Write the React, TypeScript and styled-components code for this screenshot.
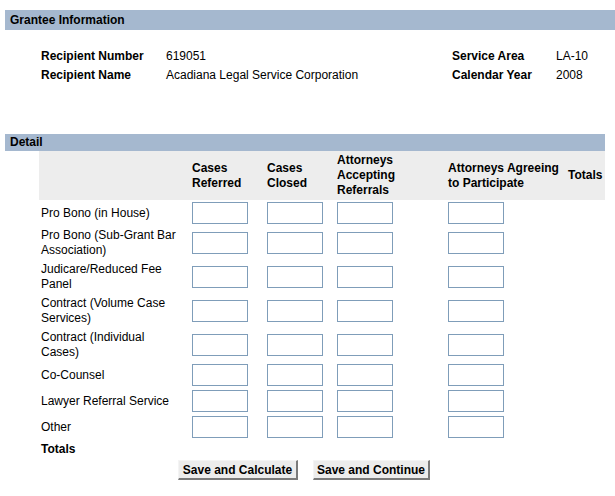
import React from "react";
import styled, { createGlobalStyle } from "styled-components";

const Global = createGlobalStyle`
  html, body { margin: 0; padding: 0; background: #ffffff; }
  body { font-family: "Liberation Sans", Arial, sans-serif; font-size: 12px; color: #000; }
`;

const Page = styled.div`
  padding: 10px 0 0 5px;
  width: 610px;
`;

const SectionBar = styled.div<{ $w: number; $h: number }>`
  width: ${(p) => p.$w}px;
  height: ${(p) => p.$h}px;
  line-height: ${(p) => p.$h}px;
  box-sizing: border-box;
  padding-left: 5px;
  background: #a5b8cf;
  font-weight: bold;
  font-size: 12px;
`;

const InfoGrid = styled.div`
  display: grid;
  grid-template-columns: 125px 286px 104px auto;
  grid-auto-rows: 19px;
  align-items: center;
  padding-left: 36px;
  margin-top: 16px;
  margin-bottom: 50px;
`;

const InfoLabel = styled.div`
  font-weight: bold;
`;

const InfoValue = styled.div``;

const Table = styled.table`
  margin-left: 34px;
  border-collapse: collapse;
  border-spacing: 0;
  table-layout: fixed;
  width: 566px;
`;

const HeadRow = styled.tr`
  background: #ededed;
`;

const HeadCell = styled.th`
  padding: 2px;
  height: 45px;
  text-align: left;
  vertical-align: middle;
  font-weight: bold;
  line-height: 15px;
  white-space: pre-line;
`;

const Cell = styled.td`
  padding: 2px;
  vertical-align: middle;
  line-height: 15px;
`;

const LabelCell = styled(Cell)<{ $bold?: boolean }>`
  white-space: pre-line;
  font-weight: ${(p) => (p.$bold ? "bold" : "normal")};
`;

const NumInput = styled.input`
  display: block;
  box-sizing: border-box;
  width: 56px;
  height: 22px;
  margin: 0;
  padding: 1px 3px;
  border: 1px solid #7f9db9;
  background: #fff;
  font-family: "Liberation Sans", Arial, sans-serif;
  font-size: 12px;
`;

const ButtonCell = styled.td`
  padding: 1px 2px 2px 2px;
`;

const ButtonBar = styled.div`
  display: flex;
  gap: 15px;
  padding-left: 137px;
`;

const Button = styled.button<{ $w: number }>`
  box-sizing: border-box;
  width: ${(p) => p.$w}px;
  height: 20px;
  padding: 0;
  background: #ececec;
  border-style: solid;
  border-width: 1px 2px 2px 1px;
  border-color: #f4f4f4 #7a7a7a #7a7a7a #f4f4f4;
  font-family: "Liberation Sans", Arial, sans-serif;
  font-size: 12px;
  font-weight: bold;
  color: #000;
  cursor: pointer;
`;

const rows = [
  "Pro Bono (in House)",
  "Pro Bono (Sub-Grant Bar\nAssociation)",
  "Judicare/Reduced Fee\nPanel",
  "Contract (Volume Case\nServices)",
  "Contract (Individual\nCases)",
  "Co-Counsel",
  "Lawyer Referral Service",
  "Other",
];

const headers = [
  "Cases\nReferred",
  "Cases\nClosed",
  "Attorneys\nAccepting\nReferrals",
  "Attorneys Agreeing\nto Participate",
  "Totals",
];

const colWidths = [151, 75, 70, 111, 120, 39];

export default function App() {
  return (
    <>
      <Global />
      <Page>
        <SectionBar $w={610} $h={20}>Grantee Information</SectionBar>
        <InfoGrid>
          <InfoLabel>Recipient Number</InfoLabel>
          <InfoValue>619051</InfoValue>
          <InfoLabel>Service Area</InfoLabel>
          <InfoValue>LA-10</InfoValue>
          <InfoLabel>Recipient Name</InfoLabel>
          <InfoValue>Acadiana Legal Service Corporation</InfoValue>
          <InfoLabel>Calendar Year</InfoLabel>
          <InfoValue>2008</InfoValue>
        </InfoGrid>
        <SectionBar $w={600} $h={17}>Detail</SectionBar>
        <Table>
          <colgroup>
            {colWidths.map((w, i) => (
              <col key={i} style={{ width: w }} />
            ))}
          </colgroup>
          <thead>
            <HeadRow>
              <HeadCell />
              {headers.map((h) => (
                <HeadCell key={h}>{h}</HeadCell>
              ))}
            </HeadRow>
          </thead>
          <tbody>
            {rows.map((r) => (
              <tr key={r}>
                <LabelCell>{r}</LabelCell>
                <Cell><NumInput type="text" /></Cell>
                <Cell><NumInput type="text" /></Cell>
                <Cell><NumInput type="text" /></Cell>
                <Cell><NumInput type="text" /></Cell>
                <Cell />
              </tr>
            ))}
            <tr>
              <LabelCell $bold>Totals</LabelCell>
              <Cell />
              <Cell />
              <Cell />
              <Cell />
              <Cell />
            </tr>
            <tr>
              <ButtonCell colSpan={6}>
                <ButtonBar>
                  <Button $w={120}>Save and Calculate</Button>
                  <Button $w={117}>Save and Continue</Button>
                </ButtonBar>
              </ButtonCell>
            </tr>
          </tbody>
        </Table>
      </Page>
    </>
  );
}
